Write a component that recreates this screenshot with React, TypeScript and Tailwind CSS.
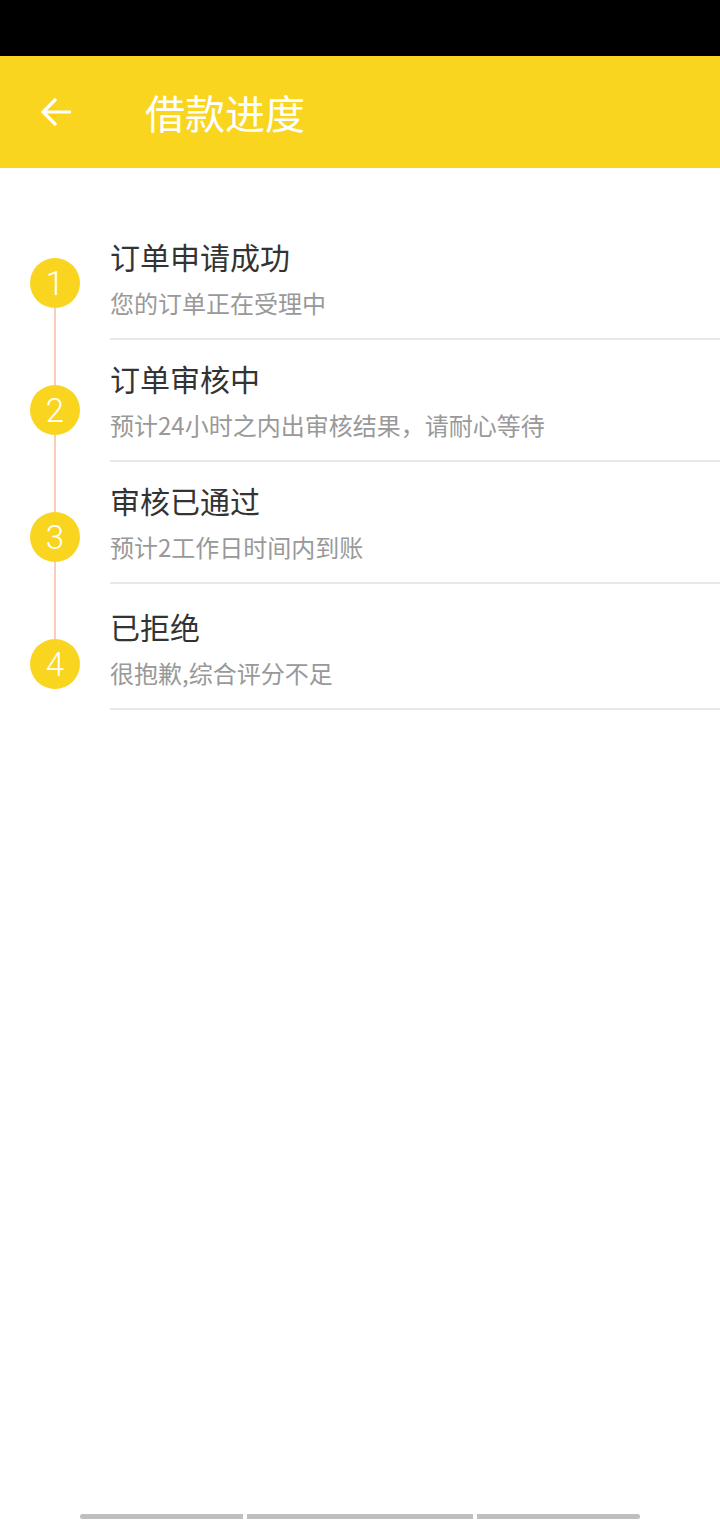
import React from "react";

const steps = [
  { n: 1, title: "订单申请成功", sub: "您的订单正在受理中", extra: false },
  { n: 2, title: "订单审核中", sub: "预计24小时之内出审核结果，请耐心等待", extra: false },
  { n: 3, title: "审核已通过", sub: "预计2工作日时间内到账", extra: false },
  { n: 4, title: "已拒绝", sub: "很抱歉,综合评分不足", extra: true },
];

export default function App() {
  return (
    <div
      className="flex h-[1520px] w-[720px] flex-col overflow-hidden bg-white"
      style={{ fontFamily: '"Noto Sans CJK SC", "Noto Sans", sans-serif' }}
    >
      <div className="h-[56px] bg-black" />
      <div className="flex h-[112px] items-center bg-[#F9D51F]">
        <div className="ml-[40px] flex h-[32px] w-[32px] items-center justify-center">
          <svg width="32" height="32" viewBox="0 0 32 32" fill="none">
            <path
              d="M31 16H3M16 3L3 16L16 29"
              stroke="white"
              strokeWidth="3.2"
              strokeLinecap="butt"
              strokeLinejoin="miter"
            />
          </svg>
        </div>
        <div className="ml-[73px] text-[40px] leading-[48px] text-white">借款进度</div>
      </div>

      <div className="flex">
        <div className="flex w-[110px] flex-col items-center pt-[90px]">
          {steps.map((s, i) => (
            <React.Fragment key={s.n}>
              {i > 0 && <div className="h-[77px] w-[2px] bg-[#F8CDB9]" />}
              <div className="flex h-[50px] w-[50px] items-center justify-center rounded-full bg-[#F9D51F] text-[33px] leading-none text-white">
                <span style={{ fontFamily: '"Roboto", "Noto Sans", sans-serif', fontWeight: 300 }}>{s.n}</span>
              </div>
            </React.Fragment>
          ))}
        </div>
        <div className="flex flex-1 flex-col pt-[50px]">
          {steps.map((s) => (
            <div
              key={s.n}
              className={`flex flex-col border-b-2 border-[#E8E8E8] pb-[20px] ${s.extra ? "pt-[24px]" : "pt-[20px]"}`}
            >
              <div className="text-[30px] leading-[36px] text-[#333333]">{s.title}</div>
              <div className="mt-[14px] text-[24px] leading-[30px] text-[#999999]">{s.sub}</div>
            </div>
          ))}
        </div>
      </div>

      <div className="flex-1" />
      <div className="flex h-[6px] gap-[4px] pl-[80px]">
        <div className="h-[5px] w-[163px] rounded-l-full bg-[#BFBFBF]" />
        <div className="h-[5px] w-[226px] bg-[#BFBFBF]" />
        <div className="h-[5px] w-[163px] rounded-r-full bg-[#BFBFBF]" />
      </div>
    </div>
  );
}
